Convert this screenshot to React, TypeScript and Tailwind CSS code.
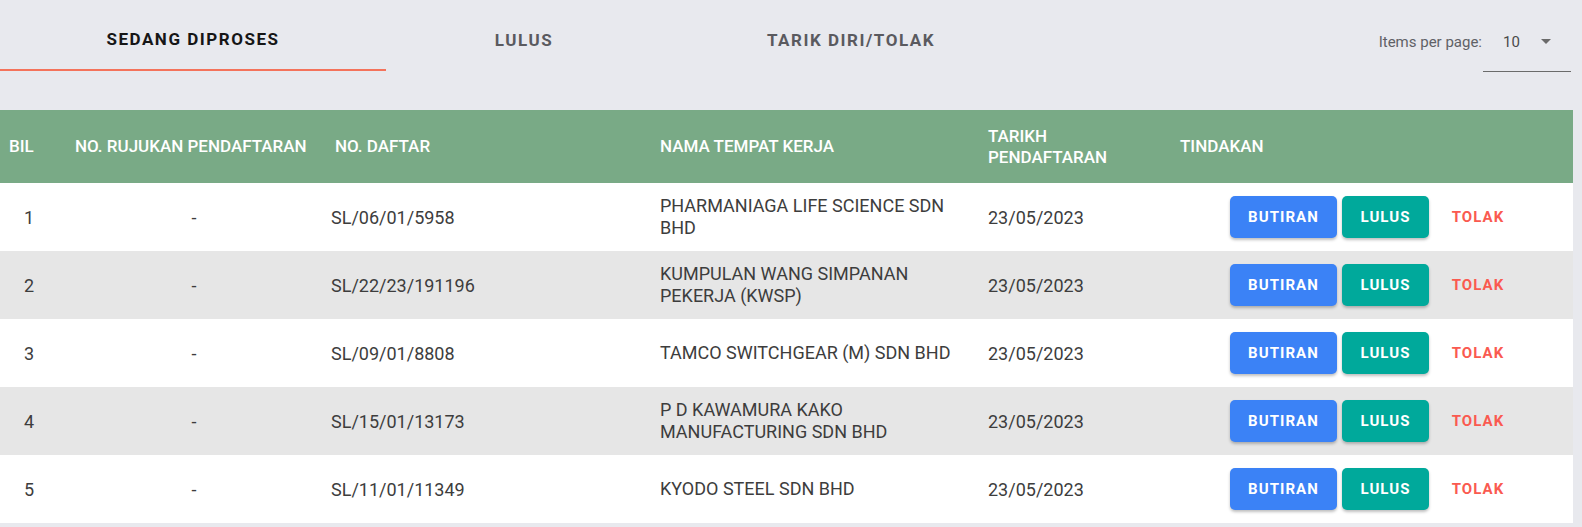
import React from "react";

type Row = {
  bil: number;
  rujukan: string;
  daftar: string;
  nama: string[];
  tarikh: string;
};

const rows: Row[] = [
  { bil: 1, rujukan: "-", daftar: "SL/06/01/5958", nama: ["PHARMANIAGA LIFE SCIENCE SDN", "BHD"], tarikh: "23/05/2023" },
  { bil: 2, rujukan: "-", daftar: "SL/22/23/191196", nama: ["KUMPULAN WANG SIMPANAN", "PEKERJA (KWSP)"], tarikh: "23/05/2023" },
  { bil: 3, rujukan: "-", daftar: "SL/09/01/8808", nama: ["TAMCO SWITCHGEAR (M) SDN BHD"], tarikh: "23/05/2023" },
  { bil: 4, rujukan: "-", daftar: "SL/15/01/13173", nama: ["P D KAWAMURA KAKO", "MANUFACTURING SDN BHD"], tarikh: "23/05/2023" },
  { bil: 5, rujukan: "-", daftar: "SL/11/01/11349", nama: ["KYODO STEEL SDN BHD"], tarikh: "23/05/2023" },
];

const tabs = [
  { label: "SEDANG DIPROSES", width: "w-[386px]", active: true },
  { label: "LULUS", width: "w-[276px]", active: false },
  { label: "TARIK DIRI/TOLAK", width: "w-[378px]", active: false },
];

export default function App() {
  return (
    <div className="min-h-screen bg-[#e8e9ee] font-['Roboto','Liberation_Sans',sans-serif]">
      {/* Tabs + paginator */}
      <div className="flex h-[110px] items-start">
        {tabs.map((tab) => (
          <div
            key={tab.label}
            className={`${tab.width} flex h-[71px] items-center justify-center pt-[10px] text-[17px] font-bold tracking-[0.09em] ${
              tab.active ? "border-b-2 border-[#f4735b] text-[#161616]" : "text-[#5a5a5f]"
            }`}
          >
            {tab.label}
          </div>
        ))}

        <div className="ml-auto mr-[11px] flex h-[72px] items-start pt-[31px]">
          <span className="pr-[1px] text-[15px] text-[#5f6166]">Items per page:</span>
          <div className="flex h-[41px] w-[88px] items-start justify-between border-b border-[#6b6b6b] pl-[20px] pr-[20px]">
            <span className="text-[15px] text-[#4a4a4a]">10</span>
            <svg width="10" height="5" viewBox="0 0 10 5" className="mt-[8px]">
              <polygon points="0,0 10,0 5,5" fill="#6a6a6a" />
            </svg>
          </div>
        </div>
      </div>

      {/* Table */}
      <div className="w-[1573px]">
        <div className="flex h-[73px] items-center bg-[#79aa86] text-[17px] font-medium text-white">
          <div className="w-[58px] pl-[9px]">BIL</div>
          <div className="w-[272px] pl-[17px]">NO. RUJUKAN PENDAFTARAN</div>
          <div className="w-[330px] pl-[5px]">NO. DAFTAR</div>
          <div className="w-[328px]">NAMA TEMPAT KERJA</div>
          <div className="w-[192px] leading-[21px]">
            TARIKH
            <br />
            PENDAFTARAN
          </div>
          <div className="flex-1">TINDAKAN</div>
        </div>

        {rows.map((row, i) => (
          <div
            key={row.bil}
            className={`flex h-[68px] items-center text-[18px] text-[#3d3d3d] ${
              i % 2 === 1 ? "bg-[#e6e6e6]" : "bg-white"
            }`}
          >
            <div className="w-[58px] text-center">{row.bil}</div>
            <div className="w-[272px] text-center">{row.rujukan}</div>
            <div className="w-[330px] pl-[1px]">{row.daftar}</div>
            <div className="w-[328px] leading-[22px]">
              {row.nama.map((line) => (
                <div key={line}>{line}</div>
              ))}
            </div>
            <div className="w-[192px]">{row.tarikh}</div>
            <div className="flex flex-1 items-center pl-[50px]">
              <button className="h-[42px] w-[107px] rounded-[5px] bg-[#3b82f6] text-[15px] font-bold tracking-[0.07em] text-white shadow-[0_2px_3px_rgba(0,0,0,0.25)]">
                BUTIRAN
              </button>
              <button className="ml-[5px] h-[42px] w-[87px] rounded-[5px] bg-[#00a99b] text-[15px] font-bold tracking-[0.07em] text-white shadow-[0_2px_3px_rgba(0,0,0,0.25)]">
                LULUS
              </button>
              <button className="ml-[5px] h-[42px] w-[88px] rounded-[5px] text-[15px] font-bold tracking-[0.07em] text-[#fa5a50]">
                TOLAK
              </button>
            </div>
          </div>
        ))}
      </div>
    </div>
  );
}
